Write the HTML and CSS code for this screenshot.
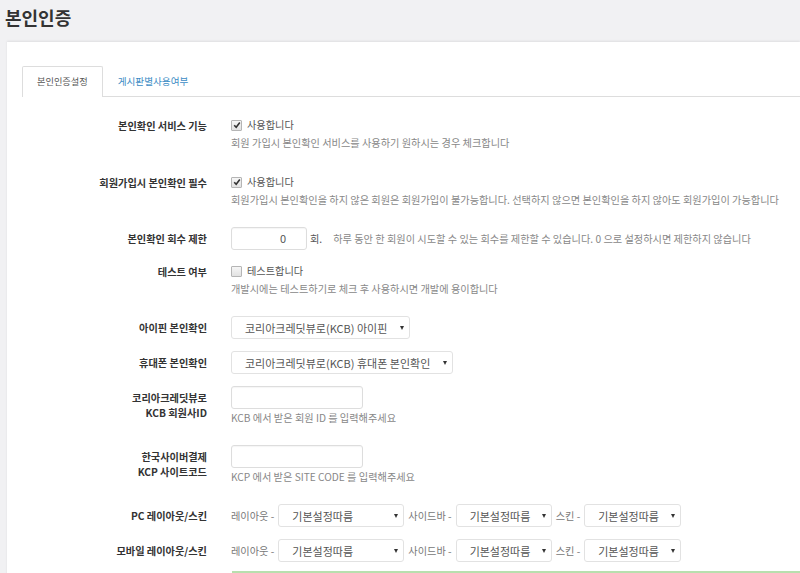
FILE: index.html
```html
<!DOCTYPE html>
<html>
<head>
  <title>본인인증</title>
  <link rel="stylesheet" href="styles.css">
</head>
<body>
  <h3 class="page-title">본인인증</h3>

  <div class="box">
    <ul class="nav-tabs">
      <li class="active">본인인증설정</li>
      <li>게시판별사용여부</li>
    </ul>

    <div class="form-row first">
      <div class="form-label">본인확인 서비스 기능</div>
      <div class="form-control">
        <div class="check-line">
          <span class="checkbox checked"><svg width="8" height="8" viewBox="0 0 8 8"><path d="M1.2 4.2 L3.2 6.2 L6.8 1.6" fill="none" stroke="#333" stroke-width="1.6"/></svg></span>
          사용합니다
        </div>
        <div class="help-block">회원 가입시 본인확인 서비스를 사용하기 원하시는 경우 체크합니다</div>
      </div>
    </div>

    <div class="form-row">
      <div class="form-label">회원가입시 본인확인 필수</div>
      <div class="form-control">
        <div class="check-line">
          <span class="checkbox checked"><svg width="8" height="8" viewBox="0 0 8 8"><path d="M1.2 4.2 L3.2 6.2 L6.8 1.6" fill="none" stroke="#333" stroke-width="1.6"/></svg></span>
          사용합니다
        </div>
        <div class="help-block">회원가입시 본인확인을 하지 않은 회원은 회원가입이 불가능합니다. 선택하지 않으면 본인확인을 하지 않아도 회원가입이 가능합니다</div>
      </div>
    </div>

    <div class="form-row boxed">
      <div class="form-label">본인확인 회수 제한</div>
      <div class="form-control inline">
        <span class="text-input count">0</span>
        <span class="unit">회.</span>
        <span class="help-inline">하루 동안 한 회원이 시도할 수 있는 회수를 제한할 수 있습니다. 0 으로 설정하시면 제한하지 않습니다</span>
      </div>
    </div>

    <div class="form-row">
      <div class="form-label">테스트 여부</div>
      <div class="form-control">
        <div class="check-line">
          <span class="checkbox"></span>
          테스트합니다
        </div>
        <div class="help-block">개발시에는 테스트하기로 체크 후 사용하시면 개발에 용이합니다</div>
      </div>
    </div>

    <div class="form-row boxed">
      <div class="form-label">아이핀 본인확인</div>
      <div class="form-control">
        <span class="select ipin">코리아크레딧뷰로(KCB) 아이핀<i class="caret"></i></span>
      </div>
    </div>

    <div class="form-row boxed">
      <div class="form-label">휴대폰 본인확인</div>
      <div class="form-control">
        <span class="select phone">코리아크레딧뷰로(KCB) 휴대폰 본인확인<i class="caret"></i></span>
      </div>
    </div>

    <div class="form-row boxed">
      <div class="form-label">코리아크레딧뷰로<br>KCB 회원사ID</div>
      <div class="form-control">
        <span class="text-input code"></span>
        <div class="help-block">KCB 에서 받은 회원 ID 를 입력해주세요</div>
      </div>
    </div>

    <div class="form-row boxed">
      <div class="form-label">한국사이버결제<br>KCP 사이트코드</div>
      <div class="form-control">
        <span class="text-input code"></span>
        <div class="help-block">KCP 에서 받은 SITE CODE 를 입력해주세요</div>
      </div>
    </div>

    <div class="form-row boxed">
      <div class="form-label">PC 레이아웃/스킨</div>
      <div class="form-control inline">
        <span class="sub-label">레이아웃 -</span>
        <span class="select layout">기본설정따름<i class="caret"></i></span>
        <span class="sub-label">사이드바 -</span>
        <span class="select sidebar">기본설정따름<i class="caret"></i></span>
        <span class="sub-label">스킨 -</span>
        <span class="select skin">기본설정따름<i class="caret"></i></span>
      </div>
    </div>

    <div class="form-row boxed">
      <div class="form-label">모바일 레이아웃/스킨</div>
      <div class="form-control inline">
        <span class="sub-label">레이아웃 -</span>
        <span class="select layout">기본설정따름<i class="caret"></i></span>
        <span class="sub-label">사이드바 -</span>
        <span class="select sidebar">기본설정따름<i class="caret"></i></span>
        <span class="sub-label">스킨 -</span>
        <span class="select skin">기본설정따름<i class="caret"></i></span>
      </div>
    </div>

    <div class="alert-row">
      <div class="alert-success"></div>
    </div>
  </div>
</body>
</html>
```

FILE: styles.css
```css
body {
  margin: 0;
  background-color: #f1f1f3;
  font-family: "Noto Sans CJK KR", "Noto Sans", sans-serif;
  color: #333;
  overflow: hidden;
  height: 573px;
}

.page-title {
  margin: 0;
  padding: 5px 0 0 5px;
  height: 37px;
  font-size: 18px;
  line-height: 25px;
  font-weight: 700;
  color: #333;
}

.box {
  background-color: #fff;
  margin-left: 7px;
  padding: 24px 0 0 15px;
  box-shadow: 0 -1px 2px rgba(0, 0, 0, 0.08);
  height: 600px;
}

.nav-tabs {
  list-style: none;
  margin: 0 0 19px 0;
  padding: 0;
  display: flex;
  border-bottom: 1px solid #ddd;
}

.nav-tabs li {
  height: 29px;
  line-height: 29px;
  padding: 0 14px;
  font-size: 9.2px;
  color: #3b8bc4;
  border: 1px solid transparent;
  border-bottom: none;
  margin-bottom: -1px;
  margin-right: 1px;
}

.nav-tabs li + li {
  font-size: 9.6px;
  padding-left: 13px;
}

.nav-tabs li.active {
  color: #555;
  background-color: #fff;
  border-color: #ddd;
  border-radius: 2px 2px 0 0;
  height: 30px;
}

.form-row {
  display: flex;
  gap: 24px;
  margin-bottom: 12px;
}

.form-row.first {
  margin-bottom: 15px;
}

.form-label {
  width: 185px;
  flex-shrink: 0;
  text-align: right;
  font-size: 10.2px;
  font-weight: 700;
  line-height: 15px;
  padding-top: 1.5px;
  color: #333;
}

.form-row.boxed .form-label {
  padding-top: 4px;
}

.form-control {
  font-size: 10.2px;
  white-space: nowrap;
}

.form-control.inline {
  display: flex;
  align-items: center;
  height: 23px;
}

.check-line {
  display: flex;
  align-items: center;
  height: 18px;
  line-height: 18px;
  color: #555;
}

.checkbox {
  display: inline-flex;
  align-items: center;
  justify-content: center;
  width: 9px;
  height: 9px;
  border: 1px solid #b5b5b5;
  border-radius: 1px;
  background: linear-gradient(#f6f6f6, #e2e2e2);
  margin-right: 5px;
}

.help-block {
  line-height: 18px;
  color: #888;
  margin-bottom: 6px;
}

.text-input {
  display: block;
  box-sizing: border-box;
  height: 23px;
  border: 1px solid #ddd;
  border-radius: 3px;
  box-shadow: inset 0 1px 1px rgba(0, 0, 0, 0.04);
  font-size: 11px;
  line-height: 21px;
  color: #555;
}

.text-input.count {
  width: 76px;
  text-align: right;
  padding-right: 20px;
}

.text-input.code {
  width: 132px;
}

.unit {
  margin-left: 3px;
  color: #555;
  font-size: 10.2px;
}

.help-inline {
  margin-left: 11px;
  color: #888;
}

.select {
  display: inline-flex;
  box-sizing: border-box;
  align-items: center;
  justify-content: space-between;
  height: 23px;
  border: 1px solid #e2e2e2;
  border-radius: 3px;
  padding: 0 5px 0 13px;
  font-size: 11px;
  color: #555;
}

.select.ipin {
  width: 179px;
}

.select.phone {
  width: 222px;
}

.select.layout {
  width: 126px;
  margin-right: 4px;
}

.select.sidebar {
  width: 96px;
  margin-right: 4px;
}

.select.skin {
  width: 97px;
}

.caret {
  width: 0;
  height: 0;
  border-left: 2.5px solid transparent;
  border-right: 2.5px solid transparent;
  border-top: 4px solid #333;
  margin-left: 10px;
}

.sub-label {
  color: #777;
  margin-right: 4px;
}

.alert-row {
  padding-left: 210px;
  margin-top: -3px;
}

.alert-success {
  height: 30px;
  border-top: 2px solid #b8dfae;
  background-color: #eef8ea;
}
```
